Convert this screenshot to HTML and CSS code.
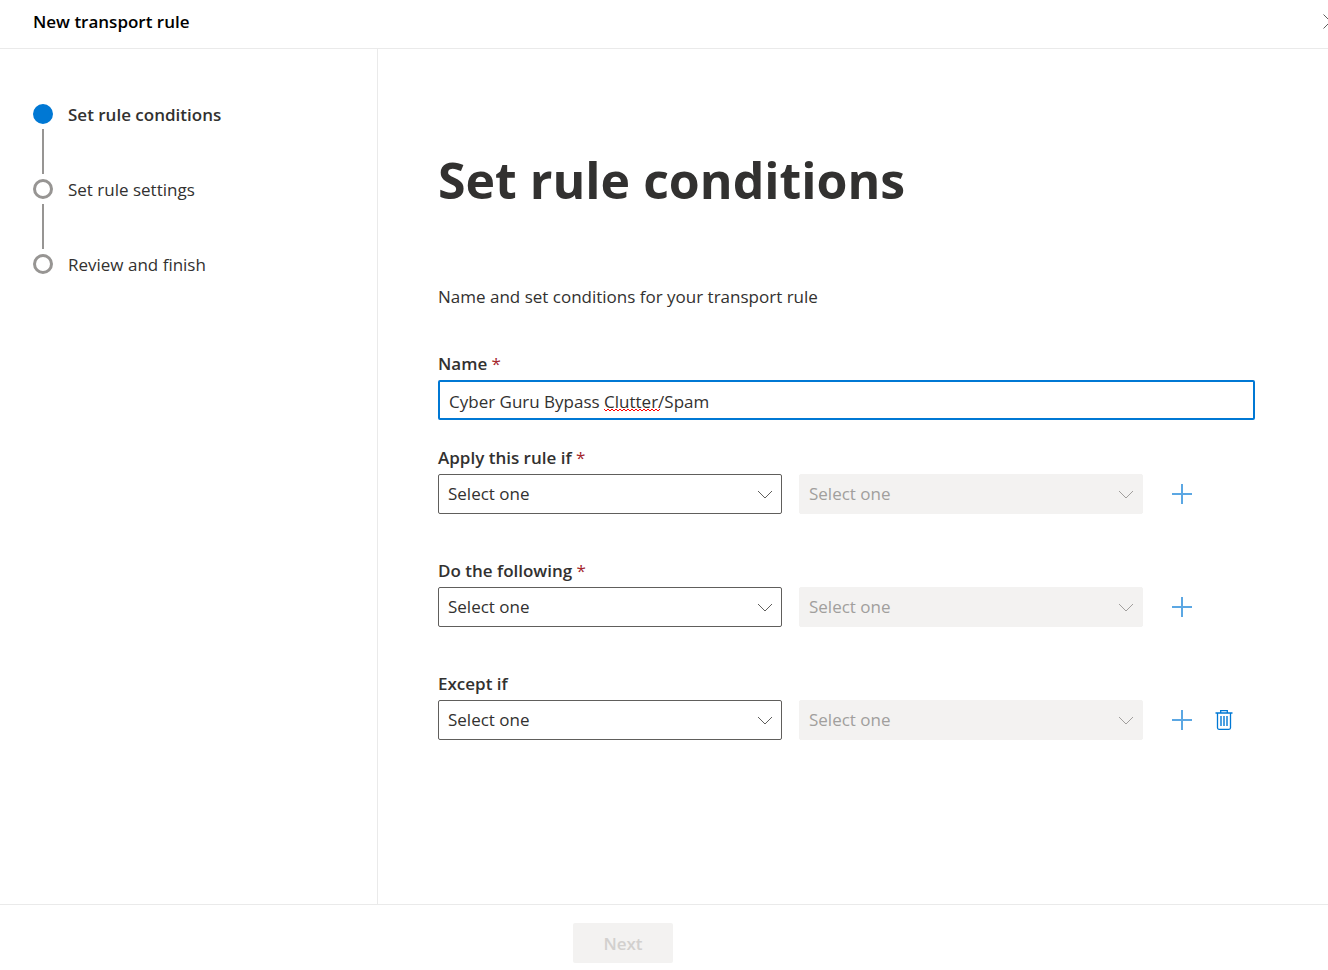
FILE: index.html
```html
<!DOCTYPE html>
<html lang="en">
<head>
<meta charset="utf-8" />
<meta name="viewport" content="width=device-width, initial-scale=1" />
<title>New transport rule</title>
<link rel="stylesheet" href="styles.css">
</head>
<body>
  <header class="panel-header">
    <h2>New transport rule</h2>
    <button type="button" class="close" aria-label="Close">
      <svg width="15" height="15" viewBox="0 0 15 15"><path d="M0.5 0.5 L14.5 14.5 M14.5 0.5 L0.5 14.5" /></svg>
    </button>
  </header>

  <div class="wizard">
    <nav class="steps" aria-label="Steps">
      <ol>
        <li class="current" aria-current="step">Set rule conditions</li>
        <li>Set rule settings</li>
        <li>Review and finish</li>
      </ol>
    </nav>

    <main>
      <h1>Set rule conditions</h1>
      <p class="intro">Name and set conditions for your transport rule</p>

      <form id="rule">
        <div class="field name-field">
          <label for="name">Name <span class="required">*</span></label>
          <div class="text-box">
            <input type="text" id="name" value="Cyber Guru Bypass Clutter/Spam" spellcheck="false" />
            <svg class="squiggle" width="56" height="4" viewBox="0 0 56 4">
              <path d="M0 1 l2 2 l2 -2 l2 2 l2 -2 l2 2 l2 -2 l2 2 l2 -2 l2 2 l2 -2 l2 2 l2 -2 l2 2 l2 -2 l2 2 l2 -2 l2 2 l2 -2 l2 2 l2 -2 l2 2 l2 -2 l2 2 l2 -2 l2 2 l2 -2 l2 2 l2 -2" />
            </svg>
          </div>
        </div>

        <div class="field">
          <label for="apply">Apply this rule if <span class="required">*</span></label>
          <div class="row">
            <div class="dropdown">
              <select id="apply"><option>Select one</option></select>
              <svg width="16" height="9" viewBox="0 0 16 9"><path d="M1 1 L8 8 L15 1" /></svg>
            </div>
            <div class="dropdown">
              <select aria-label="Apply this rule if, detail" disabled><option>Select one</option></select>
              <svg width="16" height="9" viewBox="0 0 16 9"><path d="M1 1 L8 8 L15 1" /></svg>
            </div>
            <div class="actions">
              <button type="button" aria-label="Add condition">
                <svg width="20" height="20" viewBox="0 0 20 20"><path class="plus" d="M10 0 V20 M0 10 H20" /></svg>
              </button>
            </div>
          </div>
        </div>

        <div class="field">
          <label for="do">Do the following <span class="required">*</span></label>
          <div class="row">
            <div class="dropdown">
              <select id="do"><option>Select one</option></select>
              <svg width="16" height="9" viewBox="0 0 16 9"><path d="M1 1 L8 8 L15 1" /></svg>
            </div>
            <div class="dropdown">
              <select aria-label="Do the following, detail" disabled><option>Select one</option></select>
              <svg width="16" height="9" viewBox="0 0 16 9"><path d="M1 1 L8 8 L15 1" /></svg>
            </div>
            <div class="actions">
              <button type="button" aria-label="Add action">
                <svg width="20" height="20" viewBox="0 0 20 20"><path class="plus" d="M10 0 V20 M0 10 H20" /></svg>
              </button>
            </div>
          </div>
        </div>

        <div class="field">
          <label for="except">Except if</label>
          <div class="row">
            <div class="dropdown">
              <select id="except"><option>Select one</option></select>
              <svg width="16" height="9" viewBox="0 0 16 9"><path d="M1 1 L8 8 L15 1" /></svg>
            </div>
            <div class="dropdown">
              <select aria-label="Except if, detail" disabled><option>Select one</option></select>
              <svg width="16" height="9" viewBox="0 0 16 9"><path d="M1 1 L8 8 L15 1" /></svg>
            </div>
            <div class="actions">
              <button type="button" aria-label="Add exception">
                <svg width="20" height="20" viewBox="0 0 20 20"><path class="plus" d="M10 0 V20 M0 10 H20" /></svg>
              </button>
              <button type="button" aria-label="Delete exception">
                <svg width="18" height="20" viewBox="0 0 18 20">
                  <path class="bin" d="M0.5 3 H17.5 M5.7 3 V0.7 H12.3 V3 M2.5 3 V17.8 Q2.5 19.3 4 19.3 H14 Q15.5 19.3 15.5 17.8 V3" />
                  <path class="slats" d="M6 6 V16 M9 6 V16 M12 6 V16" />
                </svg>
              </button>
            </div>
          </div>
        </div>
      </form>
    </main>
  </div>

  <footer>
    <button type="submit" form="rule" class="next" disabled>Next</button>
  </footer>
</body>
</html>
```
FILE: styles.css
```css
* {
    box-sizing: border-box;
}

body {
    display: flex;
    flex-direction: column;
    min-height: 100vh;
    margin: 0;
    background: #fff;
    color: #323130;
    font: 17px/24px "Open Sans", "Noto Sans", sans-serif;
}

h1, h2, p, ol {
    margin: 0;
}

button, input, select {
    font: inherit;
    color: inherit;
}

button {
    padding: 0;
    border: 0;
    background: none;
}

svg {
    display: block;
    fill: none;
}

.panel-header {
    display: flex;
    align-items: center;
    justify-content: space-between;
    height: 49px;
    padding: 0 0 5px 33px;
    border-bottom: 1px solid #eaeaea;
    overflow: hidden;
}

.panel-header h2 {
    color: #000;
    font-size: 17px;
    font-weight: 600;
}

/* the close button runs past the right edge of the panel */
.close {
    margin-right: -10px;
}

.close path {
    stroke: #605e5c;
    stroke-width: 1;
}

.wizard {
    display: flex;
    flex: 1;
}

.steps {
    flex: none;
    width: 378px;
    padding: 55px 32px;
    border-right: 1px solid #eaeaea;
}

.steps ol {
    padding: 0;
    list-style: none;
}

.steps li {
    display: grid;
    grid-template-columns: 20px 1fr;
    grid-template-rows: 20px 45px;
    gap: 5px 15px;
    padding-bottom: 5px;
    line-height: 22px;
    margin-left: 1px;
}

.steps li::before {
    content: "";
    border: 3px solid #979593;
    border-radius: 50%;
}

.steps li::after {
    content: "";
    grid-row: 2;
    justify-self: center;
    width: 2px;
    background: #979593;
}

.steps li:last-child::after {
    display: none;
}

.steps .current {
    font-weight: 600;
}

.steps .current::before {
    border-color: #0078d4;
    background: #0078d4;
}

main {
    flex: 1;
    padding: 95px 73px 96px 60px;
}

h1 {
    font-size: 50px;
    line-height: 72px;
    font-weight: 700;
}

.intro {
    margin: 69px 0 43px;
}

.field {
    margin-bottom: 45px;
}

.name-field {
    margin-bottom: 26px;
}

label {
    display: block;
    margin-bottom: 4px;
    font-weight: 600;
}

.required {
    color: #a4262c;
    font-weight: 400;
}

.text-box {
    position: relative;
}

.text-box input {
    display: block;
    width: 100%;
    height: 40px;
    padding: 2px 9px 0;
    border: 2px solid #0078d4;
    border-radius: 2px;
    outline: 0;
}

.squiggle {
    position: absolute;
    left: 166px;
    top: 28px;
    stroke: #f00;
}

.row {
    display: grid;
    grid-template-columns: 1fr 1fr 95px;
    gap: 17px;
}

.dropdown {
    position: relative;
}

.dropdown select {
    display: block;
    width: 100%;
    height: 40px;
    padding: 0 36px 0 9px;
    border: 1px solid #605e5c;
    border-radius: 2px;
    background: #fff;
    appearance: none;
}

.dropdown select:disabled {
    border-color: #f3f2f1;
    background: #f3f2f1;
    color: #a19f9d;
    opacity: 1;
}

.dropdown svg {
    position: absolute;
    right: 9px;
    top: 16px;
    stroke: #605e5c;
    pointer-events: none;
}

.dropdown select:disabled + svg {
    stroke: #a19f9d;
}

.actions {
    display: flex;
    padding-left: 1px;
}

.actions button {
    display: grid;
    place-items: center;
    width: 42px;
    height: 40px;
}

.plus {
    stroke: #5ba7e3;
    stroke-width: 2;
}

.bin {
    stroke: #0078d4;
    stroke-width: 1.3;
}

.slats {
    stroke: #0078d4;
    stroke-width: 1.4;
}

footer {
    display: flex;
    justify-content: center;
    padding: 18px 82px 7px 0;
    border-top: 1px solid #eaeaea;
}

.next {
    width: 100px;
    height: 40px;
    padding-top: 2px;
    border-radius: 2px;
    background: #f3f2f1;
    color: #d2d0ce;
    font-weight: 600;
}
```
